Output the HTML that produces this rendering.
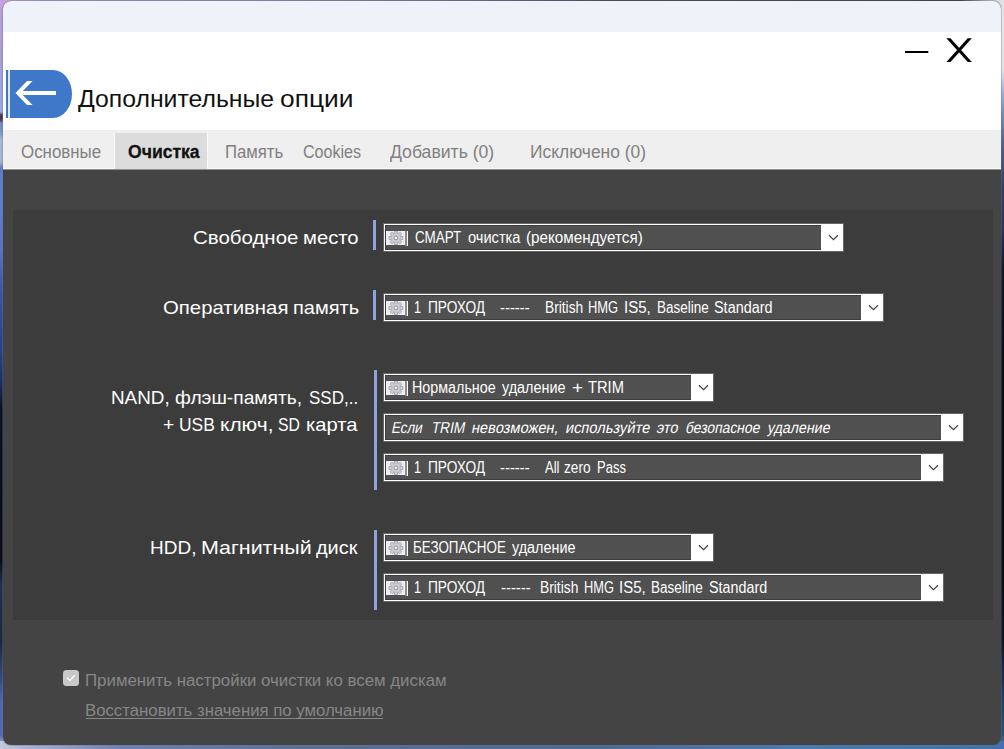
<!DOCTYPE html>
<html>
<head>
<meta charset="utf-8">
<style>
html,body{margin:0;padding:0;}
body{width:1004px;height:749px;overflow:hidden;position:relative;font-family:"Liberation Sans",sans-serif;background:#3a4a78;}
.desk{position:absolute;left:0;top:0;width:1004px;height:749px;background:#0c1020;}
.deskl{position:absolute;left:0;top:0;width:12px;height:749px;
background:linear-gradient(to bottom,#b8a0dc 0px,#aa9cd8 60px,#9aa6e0 90px,#98a8e0 112px,#4a3a50 115px,#4a3a50 120px,#7088d0 123px,#8098d0 134px,#a8b8d0 140px,#a2b4d0 162px,#5c7ccc 168px,#5a80d4 200px,#5a72c8 250px,#3a56a4 290px,#2a4286 350px,#1c2c64 385px,#0c1020 410px,#0a0c18 560px,#22324c 585px,#1a2838 640px,#3a4a88 680px,#5464ae 700px,#5a68b2 735px,#c4c8dc 749px);}
.deskr{position:absolute;left:992px;top:0;width:12px;height:749px;
background:linear-gradient(to bottom,#e6e6ea 0px,#e2e3e8 70px,#a4b6e0 90px,#7892c4 110px,#4a5c80 150px,#36425c 187px,#2a3558 230px,#10162c 270px,#0a0c18 380px,#0a0c18 560px,#0c1626 640px,#1f3a5c 690px,#2f5078 735px,#4478b0 749px);}
.deskt{position:absolute;left:0;top:0;width:1004px;height:8px;
background:linear-gradient(to right,#c4a4e0 0px,#a898c8 60px,#8f90b0 250px,#6a6c88 450px,#34364a 620px,#262838 960px,#b8b8c0 985px,#e6e6ea 1004px);}
.deskb{position:absolute;left:0;top:741px;width:1004px;height:8px;background:linear-gradient(to right,#c4c8dc 0,#a8b4d4 25px,#6f82b4 120px,#5a6f98 300px,#4f6a96 600px,#4a7ab2 800px,#4272ac 1004px);}
.win{position:absolute;left:3px;top:1px;width:998px;height:744px;border-radius:8px;overflow:hidden;background:#444444;box-shadow:0 0 0 1px rgba(110,110,125,0.35);}
.tbar{position:absolute;left:0;top:0;width:998px;height:31px;background:#f0f2f9;}
.head{position:absolute;left:0;top:31px;width:998px;height:98px;background:#ffffff;}
.tabs{position:absolute;left:0;top:129px;width:998px;height:40px;background:linear-gradient(to bottom,#efefef 0,#efefef 38px,#f9f9f9 38px,#f9f9f9 39px,#8e8e8e 39px,#8e8e8e 40px);}
.tabact{position:absolute;left:112px;top:132px;width:92px;height:36px;background:#dcdcdc;box-shadow:-1px 0 0 #f8f8f8,1px 0 0 #f8f8f8;}
.w{position:absolute;top:0;white-space:nowrap;transform-origin:0 0;display:block;}
.tabtx{position:absolute;left:0;top:141px;height:20px;line-height:20px;font-size:17.5px;color:#808080;}
.back{position:absolute;left:3px;top:69px;width:66px;height:47.6px;background:#3f78c9;border-radius:0 19px 19px 0 / 0 24px 24px 0;}
.back i{position:absolute;left:2px;top:0;width:2px;height:48px;background:#dfe9fb;}
.title{position:absolute;left:0;top:83px;height:30px;font-size:24px;color:#111;line-height:30px;}
.panel{position:absolute;left:10px;top:209px;width:980px;height:410px;background:#3c3c3c;}
.lb{position:absolute;left:0;height:27px;line-height:27px;color:#fff;font-size:19px;}
.acc{position:absolute;width:3px;background:#8fa4dc;}
.dd{position:absolute;height:25px;border:1px solid #fff;background:#505050;color:#fff;font-size:15.8px;line-height:25px;white-space:nowrap;box-sizing:content-box;box-shadow:0 0 0 1px rgba(255,255,255,0.22), inset 0 0 0 1px rgba(40,40,40,0.45);}
.dd .ic{position:absolute;left:1px;top:6px;}
.dd .br{position:absolute;left:20px;top:6px;width:3px;height:15px;background:linear-gradient(to right,#8c8c8c 0,#8c8c8c 50%,#fff 50%);}
.dd .ar{position:absolute;right:0;top:0;width:21px;height:25px;background:#fff;}
.dd .ar svg{position:absolute;left:0;top:0;}
.foot{position:absolute;left:0;height:20px;line-height:20px;color:#878787;font-size:15.8px;}
</style>
</head>
<body>
<div class="desk"></div><div class="deskl"></div><div class="deskr"></div><div class="deskt"></div><div class="deskb"></div>
<div class="win">
  <div class="tbar"></div>
  <div class="head"></div>
  <svg style="position:absolute;left:898px;top:34px" width="80" height="32" viewBox="0 0 80 32">
    <path d="M4 17H27.3" stroke="#000" stroke-width="2.2" fill="none"/>
    <path d="M45.4 3.2H49.5L70.8 26.9H66.7Z" fill="#000"/><path d="M70.8 3.2H66.7L45.4 26.9H49.5Z" fill="#000"/>
  </svg>
  <div class="back"><i></i>
    <svg style="position:absolute;left:0;top:0" width="66" height="48" viewBox="0 0 66 48">
      <path d="M9.5 23L21 11H26.6L16.7 21H50V25H16.7L26.6 35H21Z" fill="#fff"/>
    </svg>
  </div>
  <div class="title"><span class="w" style="left:74.60px;transform:scaleX(1.0322);">Дополнительные</span><span class="w" style="left:276.78px;transform:scaleX(1.0981);">опции</span></div>
  <div class="tabs"></div>
  <div class="tabact"></div>
  <div class="tabtx"><span class="w" style="left:18.01px;transform:scaleX(0.9644);">Основные</span><span class="w" style="left:124.55px;transform:scaleX(1.0044);font-weight:bold;color:#111;-webkit-text-stroke:0.3px #111;">Очистка</span><span class="w" style="left:221.89px;transform:scaleX(0.9552);">Память</span><span class="w" style="left:300.25px;transform:scaleX(0.9166);">Cookies</span><span class="w" style="left:386.70px;transform:scaleX(1.0060);">Добавить (0)</span><span class="w" style="left:526.94px;transform:scaleX(0.9943);">Исключено (0)</span></div>
  <div class="panel"></div>

  <div class="acc" style="left:370px;top:219px;height:30px"></div>
  <div class="acc" style="left:370px;top:289px;height:30px"></div>
  <div class="acc" style="left:371px;top:369px;height:120px"></div>
  <div class="acc" style="left:371px;top:529px;height:80px"></div>
  <div class="lb" style="top:222.8px"><span class="w" style="left:189.54px;transform:scaleX(1.0763);">Свободное</span><span class="w" style="left:299.54px;transform:scaleX(1.0652);">место</span></div>
  <div class="lb" style="top:292.8px"><span class="w" style="left:159.65px;transform:scaleX(1.0709);">Оперативная</span><span class="w" style="left:289.85px;transform:scaleX(1.0538);">память</span></div>
  <div class="lb" style="top:382.7px"><span class="w" style="left:108.13px;transform:scaleX(0.9927);">NAND,</span><span class="w" style="left:171.80px;transform:scaleX(1.0118);">флэш-память,</span><span class="w" style="left:306.07px;transform:scaleX(0.8956);">SSD,..</span></div>
  <div class="lb" style="top:410.3px"><span class="w" style="left:159.90px;transform:scaleX(1.0105);">+</span><span class="w" style="left:176.41px;transform:scaleX(0.9196);">USB</span><span class="w" style="left:217.19px;transform:scaleX(1.0996);">ключ,</span><span class="w" style="left:274.91px;transform:scaleX(0.8313);">SD</span><span class="w" style="left:302.84px;transform:scaleX(1.0625);">карта</span></div>
  <div class="lb" style="top:532.8px"><span class="w" style="left:147.02px;transform:scaleX(0.9991);">HDD,</span><span class="w" style="left:197.63px;transform:scaleX(1.1276);">Магнитный</span><span class="w" style="left:313.40px;transform:scaleX(1.0475);">диск</span></div>
  <div class="dd" style="left:381px;top:223px;width:457px"><svg class="ic" width="19" height="14" viewBox="0 0 19 14"><rect width="19" height="14" fill="#eeeef4"/><g transform="translate(9.9 6.9)"><g fill="#cdcdd6" stroke="#9c9ca8" stroke-width="0.7"><rect x="-1.5" y="-6.9" width="3" height="3.4" transform="rotate(0)"/><rect x="-1.5" y="-6.9" width="3" height="3.4" transform="rotate(45)"/><rect x="-1.5" y="-6.9" width="3" height="3.4" transform="rotate(90)"/><rect x="-1.5" y="-6.9" width="3" height="3.4" transform="rotate(135)"/><rect x="-1.5" y="-6.9" width="3" height="3.4" transform="rotate(180)"/><rect x="-1.5" y="-6.9" width="3" height="3.4" transform="rotate(225)"/><rect x="-1.5" y="-6.9" width="3" height="3.4" transform="rotate(270)"/><rect x="-1.5" y="-6.9" width="3" height="3.4" transform="rotate(315)"/></g><circle r="4.4" fill="#cfcfd8"/><circle r="4.4" fill="none" stroke="#b4b4be" stroke-width="0.5"/><circle r="1.9" fill="#fff" stroke="#888892" stroke-width="1"/></g></svg><span class="br"></span><span class="w" style="left:29.67px;transform:scaleX(0.8502);">СМАРТ</span><span class="w" style="left:83.14px;transform:scaleX(0.9256);">очистка</span><span class="w" style="left:141.39px;transform:scaleX(0.9648);">(рекомендуется)</span><span class="ar"><svg width="21" height="25" viewBox="0 0 21 25"><path d="M8.0 10.2L12.5 14.6L17.0 10.2" stroke="#444" stroke-width="1.2" fill="none"/></svg></span></div>
  <div class="dd" style="left:381px;top:293px;width:497px"><svg class="ic" width="19" height="14" viewBox="0 0 19 14"><rect width="19" height="14" fill="#eeeef4"/><g transform="translate(9.9 6.9)"><g fill="#cdcdd6" stroke="#9c9ca8" stroke-width="0.7"><rect x="-1.5" y="-6.9" width="3" height="3.4" transform="rotate(0)"/><rect x="-1.5" y="-6.9" width="3" height="3.4" transform="rotate(45)"/><rect x="-1.5" y="-6.9" width="3" height="3.4" transform="rotate(90)"/><rect x="-1.5" y="-6.9" width="3" height="3.4" transform="rotate(135)"/><rect x="-1.5" y="-6.9" width="3" height="3.4" transform="rotate(180)"/><rect x="-1.5" y="-6.9" width="3" height="3.4" transform="rotate(225)"/><rect x="-1.5" y="-6.9" width="3" height="3.4" transform="rotate(270)"/><rect x="-1.5" y="-6.9" width="3" height="3.4" transform="rotate(315)"/></g><circle r="4.4" fill="#cfcfd8"/><circle r="4.4" fill="none" stroke="#b4b4be" stroke-width="0.5"/><circle r="1.9" fill="#fff" stroke="#888892" stroke-width="1"/></g></svg><span class="br"></span><span class="w" style="left:28.51px;transform:scaleX(0.7962);">1</span><span class="w" style="left:42.53px;transform:scaleX(0.8687);">ПРОХОД</span><span class="w" style="left:115.34px;transform:scaleX(0.9408);">------</span><span class="w" style="left:159.73px;transform:scaleX(0.8689);">British</span><span class="w" style="left:203.29px;transform:scaleX(0.8187);">HMG</span><span class="w" style="left:239.23px;transform:scaleX(0.9498);">IS5,</span><span class="w" style="left:271.74px;transform:scaleX(0.8547);">Baseline</span><span class="w" style="left:329.25px;transform:scaleX(0.9132);">Standard</span><span class="ar"><svg width="21" height="25" viewBox="0 0 21 25"><path d="M8.0 10.2L12.5 14.6L17.0 10.2" stroke="#444" stroke-width="1.2" fill="none"/></svg></span></div>
  <div class="dd" style="left:381px;top:373px;width:327px"><svg class="ic" width="19" height="14" viewBox="0 0 19 14"><rect width="19" height="14" fill="#eeeef4"/><g transform="translate(9.9 6.9)"><g fill="#cdcdd6" stroke="#9c9ca8" stroke-width="0.7"><rect x="-1.5" y="-6.9" width="3" height="3.4" transform="rotate(0)"/><rect x="-1.5" y="-6.9" width="3" height="3.4" transform="rotate(45)"/><rect x="-1.5" y="-6.9" width="3" height="3.4" transform="rotate(90)"/><rect x="-1.5" y="-6.9" width="3" height="3.4" transform="rotate(135)"/><rect x="-1.5" y="-6.9" width="3" height="3.4" transform="rotate(180)"/><rect x="-1.5" y="-6.9" width="3" height="3.4" transform="rotate(225)"/><rect x="-1.5" y="-6.9" width="3" height="3.4" transform="rotate(270)"/><rect x="-1.5" y="-6.9" width="3" height="3.4" transform="rotate(315)"/></g><circle r="4.4" fill="#cfcfd8"/><circle r="4.4" fill="none" stroke="#b4b4be" stroke-width="0.5"/><circle r="1.9" fill="#fff" stroke="#888892" stroke-width="1"/></g></svg><span class="br"></span><span class="w" style="left:27.48px;transform:scaleX(0.9060);">Нормальное</span><span class="w" style="left:117.00px;transform:scaleX(0.9105);">удаление</span><span class="w" style="left:186.71px;transform:scaleX(1.2025);">+</span><span class="w" style="left:202.87px;transform:scaleX(0.9303);">TRIM</span><span class="ar"><svg width="21" height="25" viewBox="0 0 21 25"><path d="M8.0 10.2L12.5 14.6L17.0 10.2" stroke="#444" stroke-width="1.2" fill="none"/></svg></span></div>
  <div class="dd" style="left:381px;top:413px;width:577px"><span class="w" style="left:6.15px;transform-origin:0 18px;transform:skewX(-11deg) scaleX(0.8493);">Если</span><span class="w" style="left:46.39px;transform-origin:0 18px;transform:skewX(-11deg) scaleX(0.8632);">TRIM</span><span class="w" style="left:85.58px;transform-origin:0 18px;transform:skewX(-11deg) scaleX(0.9282);">невозможен,</span><span class="w" style="left:179.58px;transform-origin:0 18px;transform:skewX(-11deg) scaleX(0.9295);">используйте</span><span class="w" style="left:270.97px;transform-origin:0 18px;transform:skewX(-11deg) scaleX(0.9218);">это</span><span class="w" style="left:300.45px;transform-origin:0 18px;transform:skewX(-11deg) scaleX(0.8797);">безопасное</span><span class="w" style="left:382.30px;transform-origin:0 18px;transform:skewX(-11deg) scaleX(0.8989);">удаление</span><span class="ar"><svg width="21" height="25" viewBox="0 0 21 25"><path d="M8.0 10.2L12.5 14.6L17.0 10.2" stroke="#444" stroke-width="1.2" fill="none"/></svg></span></div>
  <div class="dd" style="left:381px;top:453px;width:557px"><svg class="ic" width="19" height="14" viewBox="0 0 19 14"><rect width="19" height="14" fill="#eeeef4"/><g transform="translate(9.9 6.9)"><g fill="#cdcdd6" stroke="#9c9ca8" stroke-width="0.7"><rect x="-1.5" y="-6.9" width="3" height="3.4" transform="rotate(0)"/><rect x="-1.5" y="-6.9" width="3" height="3.4" transform="rotate(45)"/><rect x="-1.5" y="-6.9" width="3" height="3.4" transform="rotate(90)"/><rect x="-1.5" y="-6.9" width="3" height="3.4" transform="rotate(135)"/><rect x="-1.5" y="-6.9" width="3" height="3.4" transform="rotate(180)"/><rect x="-1.5" y="-6.9" width="3" height="3.4" transform="rotate(225)"/><rect x="-1.5" y="-6.9" width="3" height="3.4" transform="rotate(270)"/><rect x="-1.5" y="-6.9" width="3" height="3.4" transform="rotate(315)"/></g><circle r="4.4" fill="#cfcfd8"/><circle r="4.4" fill="none" stroke="#b4b4be" stroke-width="0.5"/><circle r="1.9" fill="#fff" stroke="#888892" stroke-width="1"/></g></svg><span class="br"></span><span class="w" style="left:28.51px;transform:scaleX(0.7962);">1</span><span class="w" style="left:42.53px;transform:scaleX(0.8687);">ПРОХОД</span><span class="w" style="left:115.34px;transform:scaleX(0.9408);">------</span><span class="w" style="left:160.10px;transform:scaleX(0.8234);">All</span><span class="w" style="left:178.77px;transform:scaleX(0.8648);">zero</span><span class="w" style="left:211.68px;transform:scaleX(0.8234);">Pass</span><span class="ar"><svg width="21" height="25" viewBox="0 0 21 25"><path d="M8.0 10.2L12.5 14.6L17.0 10.2" stroke="#444" stroke-width="1.2" fill="none"/></svg></span></div>
  <div class="dd" style="left:381px;top:533px;width:327px"><svg class="ic" width="19" height="14" viewBox="0 0 19 14"><rect width="19" height="14" fill="#eeeef4"/><g transform="translate(9.9 6.9)"><g fill="#cdcdd6" stroke="#9c9ca8" stroke-width="0.7"><rect x="-1.5" y="-6.9" width="3" height="3.4" transform="rotate(0)"/><rect x="-1.5" y="-6.9" width="3" height="3.4" transform="rotate(45)"/><rect x="-1.5" y="-6.9" width="3" height="3.4" transform="rotate(90)"/><rect x="-1.5" y="-6.9" width="3" height="3.4" transform="rotate(135)"/><rect x="-1.5" y="-6.9" width="3" height="3.4" transform="rotate(180)"/><rect x="-1.5" y="-6.9" width="3" height="3.4" transform="rotate(225)"/><rect x="-1.5" y="-6.9" width="3" height="3.4" transform="rotate(270)"/><rect x="-1.5" y="-6.9" width="3" height="3.4" transform="rotate(315)"/></g><circle r="4.4" fill="#cfcfd8"/><circle r="4.4" fill="none" stroke="#b4b4be" stroke-width="0.5"/><circle r="1.9" fill="#fff" stroke="#888892" stroke-width="1"/></g></svg><span class="br"></span><span class="w" style="left:27.55px;transform:scaleX(0.8492);">БЕЗОПАСНОЕ</span><span class="w" style="left:126.60px;transform:scaleX(0.9105);">удаление</span><span class="ar"><svg width="21" height="25" viewBox="0 0 21 25"><path d="M8.0 10.2L12.5 14.6L17.0 10.2" stroke="#444" stroke-width="1.2" fill="none"/></svg></span></div>
  <div class="dd" style="left:381px;top:573px;width:557px"><svg class="ic" width="19" height="14" viewBox="0 0 19 14"><rect width="19" height="14" fill="#eeeef4"/><g transform="translate(9.9 6.9)"><g fill="#cdcdd6" stroke="#9c9ca8" stroke-width="0.7"><rect x="-1.5" y="-6.9" width="3" height="3.4" transform="rotate(0)"/><rect x="-1.5" y="-6.9" width="3" height="3.4" transform="rotate(45)"/><rect x="-1.5" y="-6.9" width="3" height="3.4" transform="rotate(90)"/><rect x="-1.5" y="-6.9" width="3" height="3.4" transform="rotate(135)"/><rect x="-1.5" y="-6.9" width="3" height="3.4" transform="rotate(180)"/><rect x="-1.5" y="-6.9" width="3" height="3.4" transform="rotate(225)"/><rect x="-1.5" y="-6.9" width="3" height="3.4" transform="rotate(270)"/><rect x="-1.5" y="-6.9" width="3" height="3.4" transform="rotate(315)"/></g><circle r="4.4" fill="#cfcfd8"/><circle r="4.4" fill="none" stroke="#b4b4be" stroke-width="0.5"/><circle r="1.9" fill="#fff" stroke="#888892" stroke-width="1"/></g></svg><span class="br"></span><span class="w" style="left:28.51px;transform:scaleX(0.7962);">1</span><span class="w" style="left:42.53px;transform:scaleX(0.8687);">ПРОХОД</span><span class="w" style="left:115.74px;transform:scaleX(0.9408);">------</span><span class="w" style="left:154.72px;transform:scaleX(0.8737);">British</span><span class="w" style="left:198.50px;transform:scaleX(0.8128);">HMG</span><span class="w" style="left:234.23px;transform:scaleX(0.9498);">IS5,</span><span class="w" style="left:266.34px;transform:scaleX(0.8547);">Baseline</span><span class="w" style="left:323.85px;transform:scaleX(0.9068);">Standard</span><span class="ar"><svg width="21" height="25" viewBox="0 0 21 25"><path d="M8.0 10.2L12.5 14.6L17.0 10.2" stroke="#444" stroke-width="1.2" fill="none"/></svg></span></div>

  <div style="position:absolute;left:60px;top:669px;width:16px;height:16px;border-radius:3.5px;background:#c8c8c8;"></div>
  <svg style="position:absolute;left:60px;top:669px" width="16" height="16" viewBox="0 0 16 16"><path d="M4 7.7L7 10.3L11.7 5.3" stroke="#fff" stroke-width="1.3" fill="none"/></svg>
  <div class="foot" style="top:670px"><span class="w" style="left:81.78px;transform:scaleX(1.0661);">Применить настройки очистки ко всем дискам</span></div>
  <div class="foot" style="top:700px"><span class="w" style="left:81.79px;transform:scaleX(1.0607);">Восстановить значения по умолчанию</span><span style="position:absolute;left:83px;top:17.3px;width:297px;height:1px;background:#878787"></span></div>
</div>
</body>
</html>
